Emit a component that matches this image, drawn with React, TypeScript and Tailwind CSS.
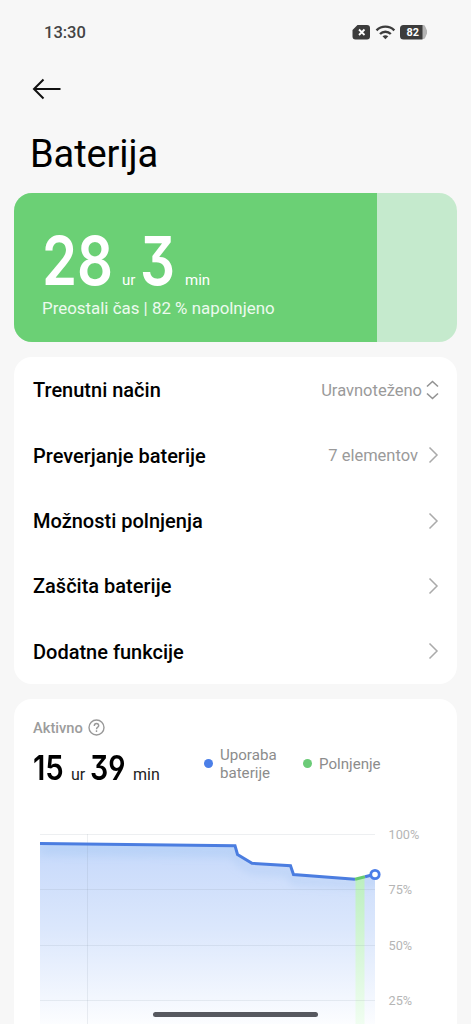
import React from "react";

const rows: { label: string; value?: string; kind: "updown" | "next" }[] = [
  { label: "Trenutni način", value: "Uravnoteženo", kind: "updown" },
  { label: "Preverjanje baterije", value: "7 elementov", kind: "next" },
  { label: "Možnosti polnjenja", kind: "next" },
  { label: "Zaščita baterije", kind: "next" },
  { label: "Dodatne funkcije", kind: "next" },
];

function StatusBar() {
  return (
    <div className="flex h-16 shrink-0 items-center justify-between pr-[43px] pl-[44px] text-[#444]">
      <span className="pt-[2px] text-[16.5px] font-medium">13:30</span>
      <svg width="76" height="18" viewBox="0 0 76 18">
        <path d="M5.5 2h9.5a3 3 0 0 1 3 3v8.500a3 3 0 0 1-3 3H3.500a3 3 0 0 1-3-3V7z" fill="#3c3c3c" />
        <path d="M7 6.500l5.500 5.500M12.500 6.500l-5.500 5.500" stroke="#fff" strokeWidth="1.800" />
        <g fill="none" stroke="#3c3c3c" strokeWidth="2.400">
          <path d="M24.500 7.300a12.700 12.700 0 0 1 17.800 0" />
          <path d="M28 11a7.700 7.700 0 0 1 10.800 0" />
        </g>
        <path d="M30.500 13.200q2.900-2.100 5.800 0l-2.900 3z" fill="#3c3c3c" />
        <path d="M70 2h1.500q1.500 0 2 2l1.500 3.500v3l-1.500 3.500q-.5 2-2 2H70z" fill="#b4b4b4" />
        <path d="M51.500 2H70.500V16.500H51.500a3.500 3.500 0 0 1-3.500-3.500V5.500a3.500 3.500 0 0 1 3.500-3.500z" fill="#3c3c3c" />
        <text x="54.500" y="13.300" fill="#fff" fontSize="11.500" fontWeight="700" textLength="12.500" lengthAdjust="spacingAndGlyphs">82</text>
      </svg>
    </div>
  );
}

function BatteryCard() {
  return (
    <section className="mx-[14px] mt-[15px] flex h-[149px] shrink-0 overflow-hidden rounded-[18px] bg-[#c5eacd] text-white">
      <div className="flex w-[363px] flex-col bg-[#6bd075] pt-[33px] pl-[28px]">
        <div className="flex h-[70px] items-baseline whitespace-nowrap">
          <span className="w-[80px] font-[Inter] text-[67px] leading-[70px] font-semibold">
            <span className="inline-block origin-left scale-x-[0.84]">28</span>
          </span>
          <span className="w-[18px] text-[15px]">ur</span>
          <span className="w-[45px] font-[Inter] text-[67px] leading-[70px] font-semibold [font-feature-settings:'cv09']">
            <span className="inline-block origin-left scale-x-[0.82]">3</span>
          </span>
          <span className="text-[15px]">min</span>
        </div>
        <p className="mt-[2px] text-[16.9px] leading-5 whitespace-nowrap text-[#ecfaee]">Preostali čas | 82 % napolnjeno</p>
      </div>
    </section>
  );
}

function RowIcon({ kind }: { kind: "updown" | "next" }) {
  if (kind === "updown") {
    return (
      <svg className="ml-[4px]" width="13" height="20" viewBox="0 0 13 20" fill="none" stroke="#929292" strokeWidth="1.600">
        <path d="M1 6.500L6.500 1.500L12 6.500M1 13.500L6.500 18.500L12 13.500" />
      </svg>
    );
  }
  return (
    <svg className="ml-[10px]" width="11" height="18" viewBox="0 0 11 18" fill="none" stroke="#aaa" strokeWidth="1.500">
      <path d="M1.500 1.500L9 9L1.500 16.500" />
    </svg>
  );
}

function Chart() {
  return (
    <svg className="block shrink-0" width="443" height="204" viewBox="14 820 443 204">
      <defs>
        <linearGradient id="usage" gradientUnits="userSpaceOnUse" x1="0" y1="842" x2="0" y2="1034">
          <stop offset="0" stopColor="#bdd6fa" />
          <stop offset="0.120" stopColor="#cbdcfb" />
          <stop offset="0.450" stopColor="#dbe7fc" />
          <stop offset="1" stopColor="#ffffff" />
        </linearGradient>
        <linearGradient id="charge" gradientUnits="userSpaceOnUse" x1="0" y1="878" x2="0" y2="1040">
          <stop offset="0" stopColor="#bcefc0" />
          <stop offset="1" stopColor="#f6fff6" />
        </linearGradient>
        <clipPath id="area">
          <path d="M40 843.500L235 845.700L237.500 854.500L252 863.300L290.500 865.700L293.500 874.500L355 879.200L375 874.500V1024H40z" />
        </clipPath>
        <filter id="soft" x="-10%" y="-50%" width="120%" height="200%">
          <feGaussianBlur stdDeviation="4" />
        </filter>
      </defs>
      <g clipPath="url(#area)">
        <rect x="40" y="840" width="335" height="184" fill="url(#usage)" />
        <path d="M40 850L235 852L238 861L252 870L290 872L294 881L355 884L380 881" fill="none" stroke="#9fc0ee" strokeOpacity=".35" strokeWidth="7" filter="url(#soft)" />
        <rect x="355.500" y="870" width="9" height="154" fill="url(#charge)" />
      </g>
      <g stroke="#718096" strokeOpacity=".13">
        <path d="M40 834.500H375M40 889.500H375M40 945.500H375M40 1000.500H375M87.500 834V1024" />
      </g>
      <path d="M40 843.500L235 845.700L237.500 854.500L252 863.300L290.500 865.700L293.500 874.500L355 879.200" fill="none" stroke="#4b7de0" strokeWidth="3" />
      <path d="M355 879.200L365 876.800" stroke="#66ca70" strokeWidth="3" />
      <path d="M365 876.800L372 875" stroke="#4b7de0" strokeWidth="3" />
      <circle cx="375" cy="874.500" r="4.200" fill="#fff" stroke="#4b7de8" strokeWidth="2.800" />
      <g fill="#b5b5b5" fontSize="12.700">
        <text x="388.500" y="839">100%</text>
        <text x="388.500" y="894.300">75%</text>
        <text x="388.500" y="949.600">50%</text>
        <text x="388.500" y="1005">25%</text>
      </g>
    </svg>
  );
}

export default function App() {
  return (
    <main className="relative flex h-[1024px] w-[471px] flex-col overflow-hidden bg-[#f7f7f7] font-[Roboto,sans-serif] text-black">
      <StatusBar />
      <header className="flex h-[114px] shrink-0 flex-col pl-[31px]">
        <svg className="mt-[14px] ml-[1px]" width="30" height="22" viewBox="0 0 30 22" fill="none" stroke="#111" strokeWidth="2">
          <path d="M2 11H28.500M11.500 1.500L2 11L11.500 20.500" />
        </svg>
        <h1 className="mt-[30px] -ml-px text-[38px] leading-[48px] tracking-[-0.1px]">Baterija</h1>
      </header>
      <BatteryCard />
      <section className="mx-[14px] mt-[15px] flex h-[327px] shrink-0 flex-col rounded-[18px] bg-white">
        {rows.map((r) => (
          <div key={r.label} className="flex h-[65.500px] items-center pr-[18px] pl-[19px]">
            <span className="flex-1 pt-[1px] text-[20px] font-medium">{r.label}</span>
            {r.value && <span className="pt-[3px] text-[16.500px] text-[#9a9a9a]">{r.value}</span>}
            <RowIcon kind={r.kind} />
          </div>
        ))}
      </section>
      <section className="mx-[14px] mt-[15px] flex h-[326px] shrink-0 flex-col rounded-t-[18px] bg-white">
        <div className="flex h-[121px] shrink-0">
          <div className="w-[190px] pt-[18px] pl-[19px]">
            <div className="flex h-5 items-center gap-[5px] text-[14.700px] font-medium text-[#9c9c9c]">
              <span className="pt-[2px]">Aktivno</span>
              <svg width="17" height="17" viewBox="0 0 17 17" fill="none" stroke="#999" strokeWidth="1.400">
                <circle cx="8.500" cy="8.500" r="7.500" />
                <path d="M6.300 6.900Q6.300 4.500 8.500 4.500Q10.700 4.500 10.700 6.700C10.700 8.200 8.500 8.200 8.500 10.200M8.500 11.300V12.900" />
              </svg>
            </div>
            <div className="mt-[10px] flex h-[42px] items-baseline whitespace-nowrap">
              <span className="w-[38px] font-[Inter] text-[34px] leading-[42px] font-semibold">
                <span className="inline-block origin-left scale-x-[0.86]">15</span>
              </span>
              <span className="w-[19px] text-[16px] text-[#222]">ur</span>
              <span className="w-[43px] font-[Inter] text-[34px] leading-[42px] font-semibold [font-feature-settings:'cv09','cv04']">
                <span className="inline-block origin-left scale-x-[0.84]">39</span>
              </span>
              <span className="text-[16px] text-[#222]">min</span>
            </div>
          </div>
          <div className="mt-[47px] flex h-[36px] items-center text-[15.100px] leading-[18px] text-[#8c8c8c]">
            <i className="-mt-[2px] size-[9px] rounded-full bg-[#4b7fe8]" />
            <span className="ml-[7px] w-[83px]">Uporaba<br />baterije</span>
            <i className="-mt-[2px] size-[9px] rounded-full bg-[#6bcb77]" />
            <span className="ml-[7px]">Polnjenje</span>
          </div>
        </div>
        <Chart />
      </section>
      <div className="absolute bottom-[7px] left-[153px] h-[5px] w-[165px] rounded-full bg-[#56585f]" />
    </main>
  );
}
